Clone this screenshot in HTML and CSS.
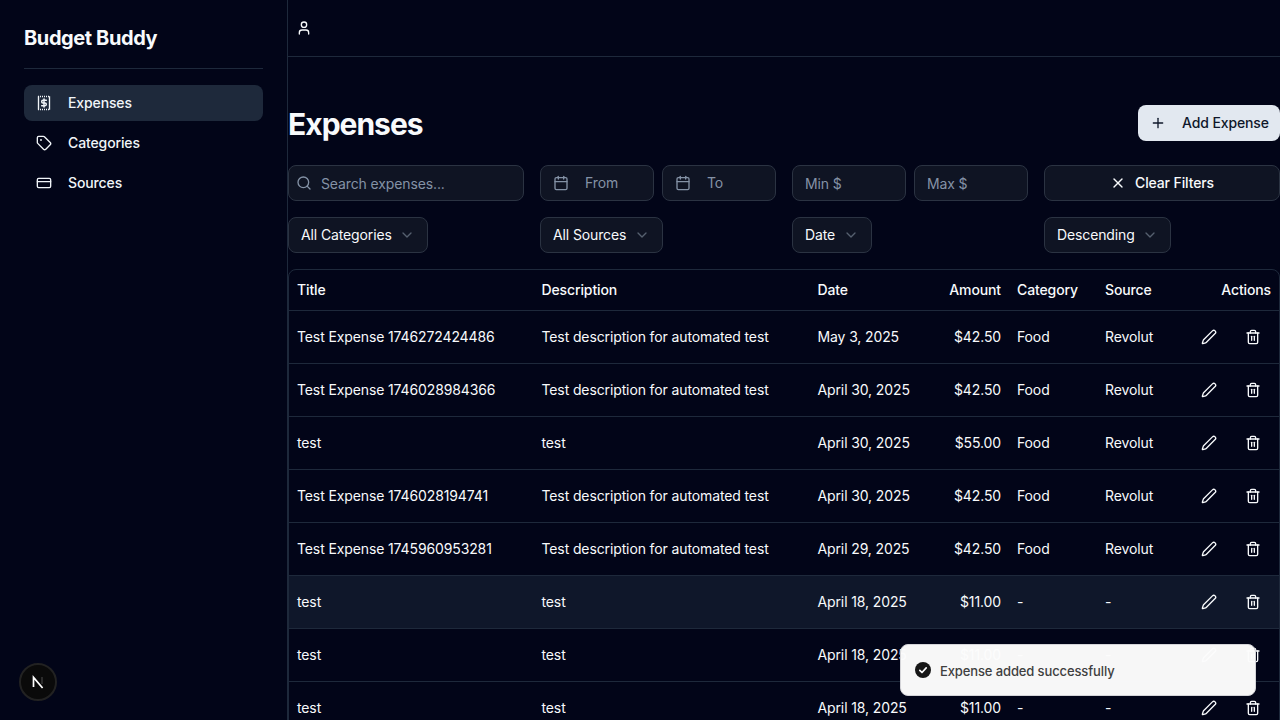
FILE: index.html
```html
<!DOCTYPE html>
<html lang="en">
<head>
    <meta charset="UTF-8">
    <meta name="viewport" content="width=device-width, initial-scale=1.0">
    <title>Budget Buddy</title>
    <link rel="stylesheet" href="styles.css">
</head>
<body>
    <svg class="icon-defs" width="0" height="0">
        <defs>
            <g id="i-pencil"><path d="M21.17 6.81a1 1 0 0 0-3.99-3.99L3.84 16.17a2 2 0 0 0-.5.83l-1.32 4.35a.5.5 0 0 0 .62.62l4.35-1.32a2 2 0 0 0 .83-.5z"/></g>
            <g id="i-trash"><path d="M3 6h18"/><path d="M19 6v14a2 2 0 0 1-2 2H7a2 2 0 0 1-2-2V6"/><path d="M8 6V4a2 2 0 0 1 2-2h4a2 2 0 0 1 2 2v2"/><path d="M10 11v6"/><path d="M14 11v6"/></g>
            <g id="i-calendar"><path d="M8 2v4"/><path d="M16 2v4"/><rect x="3" y="4" width="18" height="18" rx="2"/><path d="M3 10h18"/></g>
            <g id="i-chevron"><path d="m6 9 6 6 6-6"/></g>
        </defs>
    </svg>

    <aside class="sidebar">
        <div class="brand">Budget Buddy</div>
        <nav class="nav">
            <a class="nav-item active">
                <svg class="icon" viewBox="0 0 24 24"><path d="M3 2.25h18M3 21.75h18" stroke-width="2" stroke-dasharray="1.5 1.5" stroke-linecap="butt"/><path d="M3.75 2v20M20.25 2v20" stroke-width="2" stroke-linecap="butt"/><path d="M15.5 8h-5a2 2 0 0 0 0 4h3a2 2 0 0 1 0 4h-5" stroke-width="2.2"/><path d="M12 6v12" stroke-width="2.2"/></svg>
                Expenses
            </a>
            <a class="nav-item">
                <svg class="icon" viewBox="0 0 24 24"><path d="M12.59 2.59A2 2 0 0 0 11.17 2H4a2 2 0 0 0-2 2v7.17a2 2 0 0 0 .59 1.42l8.7 8.7a2.43 2.43 0 0 0 3.42 0l6.58-6.58a2.43 2.43 0 0 0 0-3.42z"/><circle cx="7.5" cy="7.5" r=".5" fill="currentColor"/></svg>
                Categories
            </a>
            <a class="nav-item">
                <svg class="icon" viewBox="0 0 24 24"><rect x="2" y="5" width="20" height="14" rx="2"/><path d="M2 10h20"/></svg>
                Sources
            </a>
        </nav>
    </aside>

    <div class="content">
        <header class="topbar">
            <svg class="icon icon-user" viewBox="0 0 24 24"><path d="M19 21v-2a4 4 0 0 0-4-4H9a4 4 0 0 0-4 4v2"/><circle cx="12" cy="7" r="4"/></svg>
        </header>
        <main class="page">
            <div class="page-head">
                <h1>Expenses</h1>
                <button class="btn-primary">
                    <svg class="icon" viewBox="0 0 24 24"><path d="M5 12h14"/><path d="M12 5v14"/></svg>
                    Add Expense
                </button>
            </div>

            <div class="filters">
                <div class="field field-search field-input">
                    <svg class="icon" viewBox="0 0 24 24"><path d="m21 21-4.34-4.34"/><circle cx="11" cy="11" r="8"/></svg>
                    <span>Search expenses...</span>
                </div>
                <div class="pair">
                    <div class="field field-date">
                        <svg class="icon" viewBox="0 0 24 24"><use href="#i-calendar"/></svg>
                        <span>From</span>
                    </div>
                    <div class="field field-date">
                        <svg class="icon" viewBox="0 0 24 24"><use href="#i-calendar"/></svg>
                        <span>To</span>
                    </div>
                </div>
                <div class="pair">
                    <div class="field field-input"><span>Min $</span></div>
                    <div class="field field-input"><span>Max $</span></div>
                </div>
                <button class="btn-clear">
                    <svg class="icon" viewBox="0 0 24 24"><path d="M18 6 6 18"/><path d="m6 6 12 12"/></svg>
                    Clear Filters
                </button>

                <div><button class="select">All Categories <svg class="icon" viewBox="0 0 24 24"><use href="#i-chevron"/></svg></button></div>
                <div><button class="select">All Sources <svg class="icon" viewBox="0 0 24 24"><use href="#i-chevron"/></svg></button></div>
                <div><button class="select">Date <svg class="icon" viewBox="0 0 24 24"><use href="#i-chevron"/></svg></button></div>
                <div><button class="select">Descending <svg class="icon" viewBox="0 0 24 24"><use href="#i-chevron"/></svg></button></div>
            </div>

            <div class="table-wrap">
                <table class="expenses">
                    <colgroup>
                        <col class="c-title"><col class="c-desc"><col class="c-date"><col class="c-amount"><col class="c-cat"><col class="c-src"><col class="c-act">
                    </colgroup>
                    <thead>
                        <tr><th>Title</th><th>Description</th><th>Date</th><th class="right">Amount</th><th>Category</th><th>Source</th><th class="right">Actions</th></tr>
                    </thead>
                    <tbody id="rows"></tbody>
                </table>
            </div>
        </main>
    </div>

    <div class="toast">
        <svg class="toast-icon" viewBox="0 0 20 20"><circle cx="10" cy="10" r="8" fill="#171717"/><path d="m6.8 10.3 2.2 2.2 4.2-4.6" fill="none" stroke="#fcfcfc" stroke-width="1.7" stroke-linecap="round" stroke-linejoin="round"/></svg>
        <span class="toast-text">Expense added successfully</span>
    </div>

    <div class="dev-badge">
        <svg viewBox="0 0 16 16" width="16" height="16"><path d="M12 3v7" stroke="#3a3a3a" stroke-width="1.4"/><path d="M3.5 13V3.4L12.6 14" fill="none" stroke="#fff" stroke-width="1.7"/></svg>
    </div>

    <script>
        const desc = 'Test description for automated test';
        const expenses = [
            ['Test Expense 1746272424486', desc, 'May 3, 2025', '$42.50', 'Food', 'Revolut'],
            ['Test Expense 1746028984366', desc, 'April 30, 2025', '$42.50', 'Food', 'Revolut'],
            ['test', 'test', 'April 30, 2025', '$55.00', 'Food', 'Revolut'],
            ['Test Expense 1746028194741', desc, 'April 30, 2025', '$42.50', 'Food', 'Revolut'],
            ['Test Expense 1745960953281', desc, 'April 29, 2025', '$42.50', 'Food', 'Revolut'],
            ['test', 'test', 'April 18, 2025', '$11.00', '-', '-'],
            ['test', 'test', 'April 18, 2025', '$11.00', '-', '-'],
            ['test', 'test', 'April 18, 2025', '$11.00', '-', '-']
        ];

        const rows = document.getElementById('rows');
        expenses.forEach((item, i) => {
            const row = document.createElement('tr');
            if (i === 5) row.classList.add('hovered');
            row.innerHTML = `
                <td>${item[0]}</td>
                <td>${item[1]}</td>
                <td>${item[2]}</td>
                <td class="right">${item[3]}</td>
                <td>${item[4]}</td>
                <td>${item[5]}</td>
                <td>
                    <div class="actions">
                        <button class="icon-btn"><svg class="icon" viewBox="0 0 24 24"><use href="#i-pencil"/></svg></button>
                        <button class="icon-btn"><svg class="icon" viewBox="0 0 24 24"><use href="#i-trash"/></svg></button>
                    </div>
                </td>
            `;
            rows.appendChild(row);
        });
    </script>
</body>
</html>
```

FILE: styles.css
```css
* {
    box-sizing: border-box;
}

body {
    font-family: Inter, "Liberation Sans", sans-serif;
    font-size: 14px;
    line-height: 20px;
    letter-spacing: -0.12px;
    background-color: #020518;
    color: #f8fafc;
    margin: 0;
    height: 720px;
    overflow: hidden;
    display: flex;
}

button {
    letter-spacing: inherit;
}

.icon-defs {
    position: absolute;
}

.icon {
    width: 16px;
    height: 16px;
    fill: none;
    stroke: currentColor;
    stroke-width: 2;
    stroke-linecap: round;
    stroke-linejoin: round;
    flex-shrink: 0;
}

/* sidebar */
.sidebar {
    width: 288px;
    flex-shrink: 0;
    border-right: 1px solid #1e293b;
    padding: 24px;
}

.brand {
    font-size: 20px;
    line-height: 28px;
    font-weight: 700;
    letter-spacing: -0.4px;
    padding-bottom: 16px;
    border-bottom: 1px solid #1e293b;
    margin-bottom: 16px;
}

.nav {
    display: flex;
    flex-direction: column;
    gap: 4px;
}

.nav-item {
    display: flex;
    align-items: center;
    gap: 16px;
    height: 36px;
    padding: 0 12px;
    border-radius: 8px;
    font-weight: 500;
    color: #f1f5f9;
}

.nav-item.active {
    background-color: #1e293b;
}

/* content */
.content {
    flex: 1;
    min-width: 0;
}

.topbar {
    height: 57px;
    border-bottom: 1px solid #1e293b;
    display: flex;
    align-items: center;
    padding-left: 8px;
}

.page {
    padding-top: 48px;
}

.page-head {
    display: flex;
    justify-content: space-between;
    align-items: flex-start;
    margin-bottom: 24px;
}

h1 {
    font-size: 30px;
    line-height: 36px;
    font-weight: 700;
    letter-spacing: -1px;
    height: 36px;
    padding-top: 1px;
    margin: 0;
}

.btn-primary {
    display: flex;
    align-items: center;
    gap: 16px;
    height: 36px;
    padding: 0 0 0 12px;
    width: 142px;
    border: none;
    border-radius: 8px;
    background-color: #e2e8f0;
    color: #0f172a;
    font: 500 14px/20px Inter, sans-serif;
}

/* filters */
.filters {
    display: grid;
    grid-template-columns: repeat(4, 236px);
    gap: 16px;
    margin-bottom: 16px;
}

.pair {
    display: flex;
    gap: 8px;
}

.field {
    flex: 1;
    display: flex;
    align-items: center;
    height: 36px;
    padding: 0 12px;
    background-color: #0f1423;
    border: 1px solid #2b3342;
    border-radius: 8px;
    color: #8492a6;
}

.field-input span {
    margin-top: 2px;
}

.field-search {
    gap: 9px;
    padding-left: 7px;
}

.field-date {
    gap: 16px;
}

.btn-clear {
    display: flex;
    align-items: center;
    justify-content: center;
    gap: 9px;
    height: 36px;
    background-color: #0f1423;
    border: 1px solid #2b3342;
    border-radius: 8px;
    color: #f8fafc;
    font: 500 14px/20px Inter, sans-serif;
}

.select {
    display: inline-flex;
    align-items: center;
    gap: 7.5px;
    height: 36px;
    padding: 0 12px;
    background-color: #0f1423;
    border: 1px solid #2b3342;
    border-radius: 8px;
    color: #f8fafc;
    font: 400 14px/20px Inter, sans-serif;
}

.select .icon {
    color: #56606f;
}

/* table */
.table-wrap {
    border: 1px solid #1e293b;
    border-radius: 8px;
    overflow: hidden;
}

.expenses {
    width: 100%;
    border-collapse: collapse;
    table-layout: fixed;
}

.c-title { width: 244.5px; }
.c-desc { width: 276px; }
.c-date { width: 107.5px; }
.c-amount { width: 92px; }
.c-cat { width: 88px; }
.c-src { width: 86px; }

th, td {
    padding: 0 8px;
    text-align: left;
    white-space: nowrap;
}

th {
    height: 40px;
    font-weight: 500;
}

td {
    height: 53px;
    border-top: 1px solid #1e293b;
}

.expenses .right {
    text-align: right;
}

.expenses .hovered {
    background-color: #0f172a;
}

.actions {
    display: flex;
    justify-content: flex-end;
    gap: 8px;
}

.icon-btn {
    width: 36px;
    height: 36px;
    padding: 0;
    border: none;
    background: none;
    color: #f8fafc;
    display: flex;
    align-items: center;
    justify-content: center;
}

/* overlays */
.toast {
    position: absolute;
    left: 900px;
    top: 644px;
    width: 356px;
    height: 52px;
    display: flex;
    align-items: center;
    gap: 7px;
    padding: 0 12px;
    background-color: rgba(252, 252, 252, 0.98);
    border: 1px solid #d4d4d8;
    border-radius: 8px;
    color: #3f3f3f;
    font-size: 13px;
    font-weight: 500;
}

.toast-text {
    margin-top: 2px;
}

.toast-icon {
    width: 20px;
    height: 20px;
}

.dev-badge {
    position: absolute;
    left: 19px;
    top: 663px;
    width: 38px;
    height: 38px;
    border-radius: 50%;
    background-color: #0a0a0a;
    border: 2px solid #222;
    display: flex;
    align-items: center;
    justify-content: center;
}
```
